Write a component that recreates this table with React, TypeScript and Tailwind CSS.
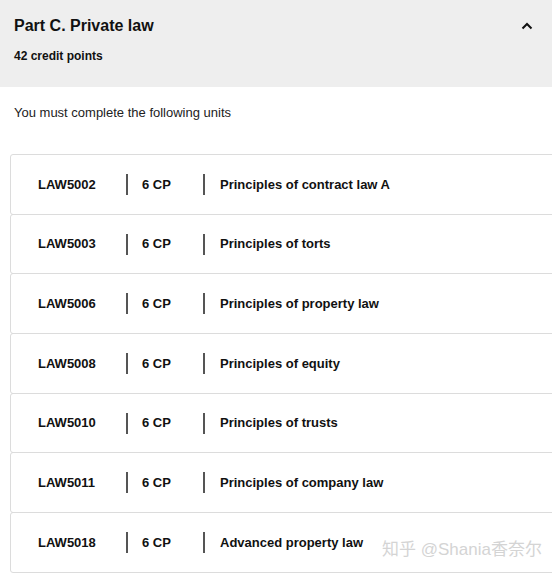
import React from 'react'

const units = [
  { code: 'LAW5002', cp: '6 CP', title: 'Principles of contract law A' },
  { code: 'LAW5003', cp: '6 CP', title: 'Principles of torts' },
  { code: 'LAW5006', cp: '6 CP', title: 'Principles of property law' },
  { code: 'LAW5008', cp: '6 CP', title: 'Principles of equity' },
  { code: 'LAW5010', cp: '6 CP', title: 'Principles of trusts' },
  { code: 'LAW5011', cp: '6 CP', title: 'Principles of company law' },
  { code: 'LAW5018', cp: '6 CP', title: 'Advanced property law' },
]

const App: React.FC = () => {
  return (
    <div
      className="relative w-[552px] h-[574px] overflow-hidden bg-white text-[#111]"
      style={{ fontFamily: '"Liberation Sans", Arial, sans-serif' }}
    >
      <div className="bg-[#eeeeee] h-[87px] pl-[14px] pr-[12px] pt-[15px]">
        <div className="flex items-center justify-between">
          <h1 className="text-[16px] font-bold leading-[22px]">Part C. Private law</h1>
          <svg width="12" height="8" viewBox="0 0 12 8" className="mr-[7px]">
            <path d="M1.5 6.5 L6 2 L10.5 6.5" fill="none" stroke="#111" strokeWidth="2" />
          </svg>
        </div>
        <p className="mt-[11px] text-[12px] font-bold leading-[16px]">42 credit points</p>
      </div>

      <p className="pl-[14px] pt-[17px] text-[13px] leading-[18px] text-[#222]">
        You must complete the following units
      </p>

      <div className="ml-[10px] mt-[32px] w-[560px]">
        {units.map((u) => (
          <div
            key={u.code}
            className="flex items-center h-[60.7px] border border-[#dcdcdc] rounded-[3px] -mt-px first:mt-0 text-[13px] font-bold"
          >
            <span className="w-[115px] pl-[27px]">{u.code}</span>
            <span className="w-[2px] h-[21px] bg-[#555]" />
            <span className="w-[75px] pl-[14px]">{u.cp}</span>
            <span className="w-[2px] h-[21px] bg-[#555]" />
            <span className="pl-[15px]">{u.title}</span>
          </div>
        ))}
      </div>

      <div
        className="absolute left-[382px] top-[539px] text-[17px] text-[#d4d4d4] leading-[22px]"
        style={{ fontFamily: '"Liberation Sans", "Noto Sans CJK SC", sans-serif' }}
      >
        知乎 @Shania香奈尔
      </div>
    </div>
  )
}

export default App
